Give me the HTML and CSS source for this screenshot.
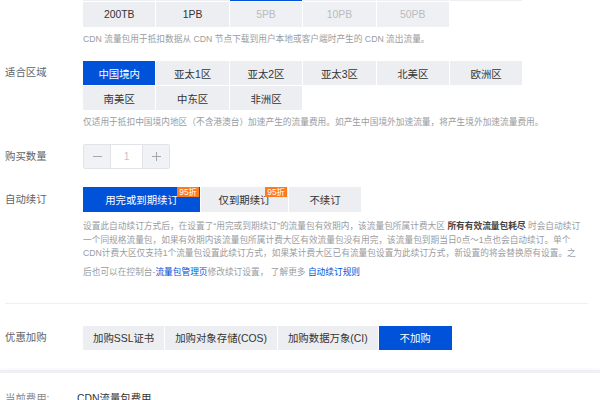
FILE: index.html
```html
<!DOCTYPE html>
<html lang="zh-CN">
<head>
<meta charset="utf-8">
<title>CDN 流量包</title>
<link rel="stylesheet" href="styles.css">
</head>
<body>
<div class="page">
  <div class="form">
    <div class="field">
      <div class="label">流量包规格</div>
      <div class="control">
        <div class="grid">
          <div class="opt">100GB</div>
          <div class="opt">500GB</div>
          <div class="opt opt-on">1TB</div>
          <div class="opt">5TB</div>
          <div class="opt">10TB</div>
          <div class="opt">50TB</div>
          <div class="opt">200TB</div>
          <div class="opt">1PB</div>
          <div class="opt opt-off">5PB</div>
          <div class="opt opt-off">10PB</div>
          <div class="opt opt-off">50PB</div>
        </div>
        <p class="hint">CDN 流量包用于抵扣数据从 CDN 节点下载到用户本地或客户端时产生的 CDN 流出流量。</p>
      </div>
    </div>

    <div class="field">
      <div class="label label-24">适合区域</div>
      <div class="control">
        <div class="grid grid-region">
          <div class="opt opt-on">中国境内</div>
          <div class="opt">亚太1区</div>
          <div class="opt">亚太2区</div>
          <div class="opt">亚太3区</div>
          <div class="opt">北美区</div>
          <div class="opt">欧洲区</div>
          <div class="opt">南美区</div>
          <div class="opt">中东区</div>
          <div class="opt">非洲区</div>
        </div>
        <p class="hint">仅适用于抵扣中国境内地区（不含港澳台）加速产生的流量费用。如产生中国境外加速流量，将产生境外加速流量费用。</p>
      </div>
    </div>

    <div class="field field-qty">
      <div class="label">购买数量</div>
      <div class="control">
        <div class="stepper">
          <div class="step"><svg width="9" height="9" viewBox="0 0 9 9"><path d="M0 4.5H9" stroke="#a3a6ad" stroke-width="1"/></svg></div>
          <div class="step-value">1</div>
          <div class="step"><svg width="9" height="9" viewBox="0 0 9 9"><path d="M0 4.5H9M4.5 0V9" stroke="#a3a6ad" stroke-width="1"/></svg></div>
        </div>
      </div>
    </div>

    <div class="field">
      <div class="label">自动续订</div>
      <div class="control">
        <div class="seg">
          <div class="seg-btn seg-btn-on seg-w117">用完或到期续订<span class="badge">95折</span></div>
          <div class="seg-btn seg-w87">仅到期续订<span class="badge">95折</span></div>
          <div class="seg-btn seg-w72">不续订</div>
        </div>
        <p class="hint hint-long">设置此自动续订方式后，在设置了“用完或到期续订”的流量包有效期内，该流量包所属计费大区 <b class="strong">所有有效流量包耗尽</b> 时会自动续订一个同规格流量包，如果有效期内该流量包所属计费大区有效流量包没有用完，该流量包到期当日0点～1点也会自动续订。单个CDN计费大区仅支持1个流量包设置此续订方式，如果某计费大区已有流量包设置为此续订方式，新设置的将会替换原有设置。之后也可以在控制台-<a class="link" href="#">流量包管理页</a>修改续订设置， 了解更多 <a class="link" href="#">自动续订规则</a></p>
      </div>
    </div>
  </div>

  <hr class="divider">

  <div class="field field-extras">
    <div class="label label-24">优惠加购</div>
    <div class="control">
      <div class="seg">
        <div class="seg-btn seg-btn-pad">加购SSL证书</div>
        <div class="seg-btn seg-btn-pad">加购对象存储(COS)</div>
        <div class="seg-btn seg-btn-pad">加购数据万象(CI)</div>
        <div class="seg-btn seg-btn-pad seg-btn-on">不加购</div>
      </div>
    </div>
  </div>
</div>

<footer class="footer">
  <div class="footer-label">当前费用:</div>
  <div class="footer-value">CDN流量包费用</div>
</footer>
</body>
</html>
```

FILE: styles.css
```css
* { box-sizing: border-box; }

html, body { overflow: hidden; }

body {
  margin: 0;
  background: #fff;
  color: #333;
  font-family: "Liberation Sans", "Noto Sans CJK SC", sans-serif;
}

.page {
  margin-top: -24px;
  padding: 0 12px 0 5px;
}

.form {
  display: flex;
  flex-direction: column;
  gap: 14.5px;
}

.field {
  display: flex;
  align-items: flex-start;
}

.field-qty { margin-bottom: 3.5px; }

.label {
  width: 78px;
  flex: none;
  font-size: 10.4px;
  line-height: 25px;
  color: #5f6368;
}

.label-24 { line-height: 24px; }

.control {
  flex: 1;
  min-width: 0;
}

.grid {
  display: grid;
  grid-template-columns: repeat(6, 72.4px);
  grid-auto-rows: 25px;
  gap: 1px;
}

.grid-region { grid-auto-rows: 24px; }

.opt {
  display: flex;
  align-items: center;
  justify-content: center;
  background: #eceef2;
  font-size: 10.4px;
  color: #333;
}

.opt-on { background: #0052d9; color: #fff; }

.opt-off { background: #eef0f3; color: #b9bcc2; }

.hint {
  margin: 6px 0 0;
  font-size: 8.7px;
  line-height: 13.5px;
  color: #999ca2;
}

.hint-long {
  margin-top: 8px;
  max-width: 500px;
}

.strong { color: #444; font-weight: bold; }

.link {
  display: inline-block;
  line-height: 22px;
  color: #0052d9;
  text-decoration: none;
}

.stepper {
  display: flex;
  width: 87px;
  height: 25px;
  border: 1px solid #e1e3e8;
  border-radius: 2px;
  overflow: hidden;
}

.step {
  width: 26px;
  flex: none;
  display: flex;
  align-items: center;
  justify-content: center;
  background: #f1f2f5;
}

.step-value {
  flex: 1;
  display: flex;
  align-items: center;
  justify-content: center;
  background: #fff;
  font-size: 10.2px;
  color: #c2c4c9;
  border-left: 1px solid #e1e3e8;
  border-right: 1px solid #e1e3e8;
}

.seg {
  display: flex;
  gap: 1px;
}

.seg-btn {
  position: relative;
  height: 25px;
  display: flex;
  align-items: center;
  justify-content: center;
  background: #eceef2;
  font-size: 10.4px;
  color: #333;
  white-space: nowrap;
}

.seg-btn-on { background: #0052d9; color: #fff; }

.seg-w117 { width: 117px; }
.seg-w87 { width: 87px; }
.seg-w72 { width: 72px; }

.seg-btn-pad {
  height: 24px;
  padding: 0 10px;
  min-width: 73px;
}

.badge {
  position: absolute;
  top: 0;
  right: 1px;
  padding: 0 2px;
  background: #ff7a1a;
  color: #fff;
  font-size: 8.4px;
  line-height: 10px;
}

.divider {
  margin: 20px 0 0;
  border: 0;
  border-top: 1px solid #eef0f3;
}

.field-extras { margin-top: 22px; }

.footer {
  margin-top: 20px;
  display: flex;
  padding: 19px 5px;
  border-top: 3px solid #eef0f4;
  box-shadow: 0 -1px 3px rgba(0, 0, 0, 0.04);
  font-size: 10.4px;
  line-height: 14px;
}

.footer-label { width: 72px; color: #888; }

.footer-value { color: #333; }
```
